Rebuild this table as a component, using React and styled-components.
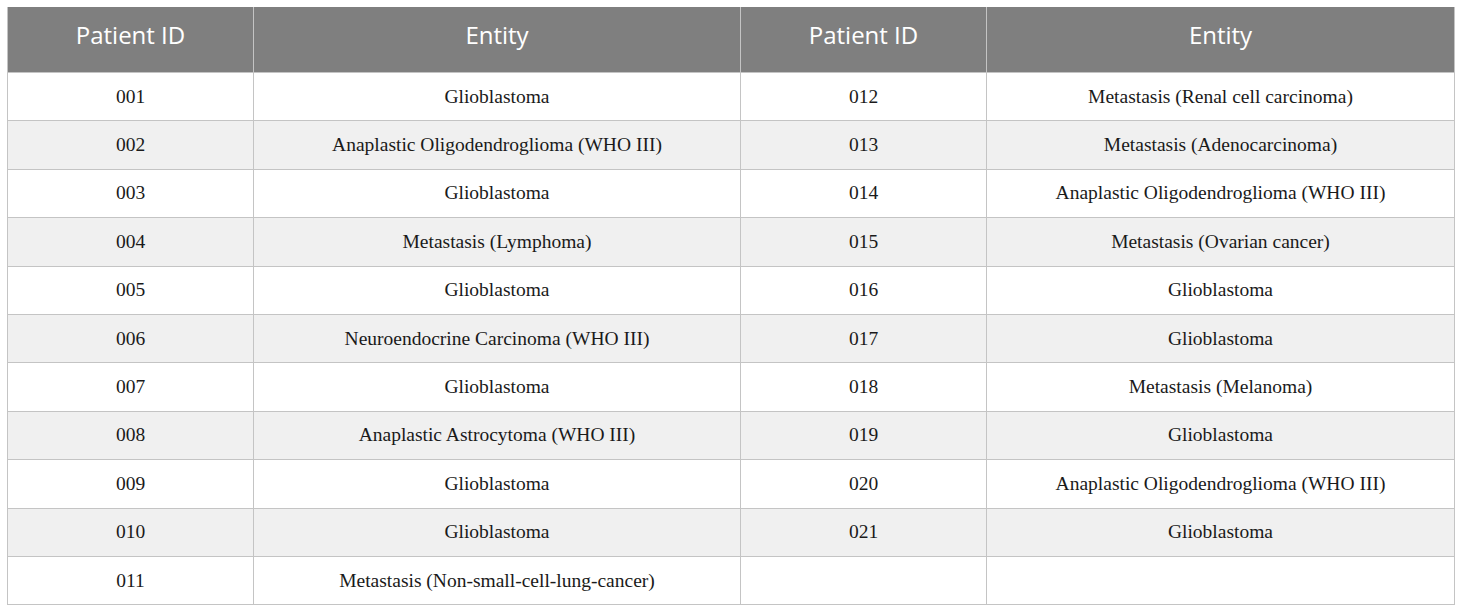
import React from 'react';
import styled, { createGlobalStyle } from 'styled-components';

const GlobalStyle = createGlobalStyle`
  html, body {
    margin: 0;
    padding: 0;
    background: #ffffff;
  }
  body {
    padding: 7px;
  }
`;

const Table = styled.table`
  width: 1447px;
  border-collapse: collapse;
  table-layout: fixed;
`;

const HeadCell = styled.th`
  height: 55px;
  padding: 0 0 10px;
  background: #7f7f7f;
  color: #ffffff;
  font-family: 'Open Sans', 'Liberation Sans', sans-serif;
  font-size: 24px;
  font-weight: 400;
  text-align: center;
  border: 1px solid #c4c4c4;
  border-top: none;
`;

const Row = styled.tr`
  background: ${({ shaded }) => (shaded ? '#f0f0f0' : '#ffffff')};
`;

const Cell = styled.td`
  height: 47.4px;
  padding: 0;
  color: #1a1a1a;
  font-family: 'Liberation Serif', 'Times New Roman', serif;
  font-size: 19.5px;
  text-align: center;
  border: 1px solid #c4c4c4;
`;

const left = [
  ['001', 'Glioblastoma'],
  ['002', 'Anaplastic Oligodendroglioma (WHO III)'],
  ['003', 'Glioblastoma'],
  ['004', 'Metastasis (Lymphoma)'],
  ['005', 'Glioblastoma'],
  ['006', 'Neuroendocrine Carcinoma (WHO III)'],
  ['007', 'Glioblastoma'],
  ['008', 'Anaplastic Astrocytoma (WHO III)'],
  ['009', 'Glioblastoma'],
  ['010', 'Glioblastoma'],
  ['011', 'Metastasis (Non-small-cell-lung-cancer)'],
];

const right = [
  ['012', 'Metastasis (Renal cell carcinoma)'],
  ['013', 'Metastasis (Adenocarcinoma)'],
  ['014', 'Anaplastic Oligodendroglioma (WHO III)'],
  ['015', 'Metastasis (Ovarian cancer)'],
  ['016', 'Glioblastoma'],
  ['017', 'Glioblastoma'],
  ['018', 'Metastasis (Melanoma)'],
  ['019', 'Glioblastoma'],
  ['020', 'Anaplastic Oligodendroglioma (WHO III)'],
  ['021', 'Glioblastoma'],
  ['', ''],
];

export default function App() {
  return (
    <>
      <GlobalStyle />
      <Table>
        <colgroup>
          <col style={{ width: 246 }} />
          <col style={{ width: 487 }} />
          <col style={{ width: 246 }} />
          <col style={{ width: 468 }} />
        </colgroup>
        <thead>
          <tr>
            <HeadCell>Patient ID</HeadCell>
            <HeadCell>Entity</HeadCell>
            <HeadCell>Patient ID</HeadCell>
            <HeadCell>Entity</HeadCell>
          </tr>
        </thead>
        <tbody>
          {left.map((l, i) => (
            <Row key={l[0]} shaded={i % 2 === 1}>
              <Cell>{l[0]}</Cell>
              <Cell>{l[1]}</Cell>
              <Cell>{right[i][0]}</Cell>
              <Cell>{right[i][1]}</Cell>
            </Row>
          ))}
        </tbody>
      </Table>
    </>
  );
}
